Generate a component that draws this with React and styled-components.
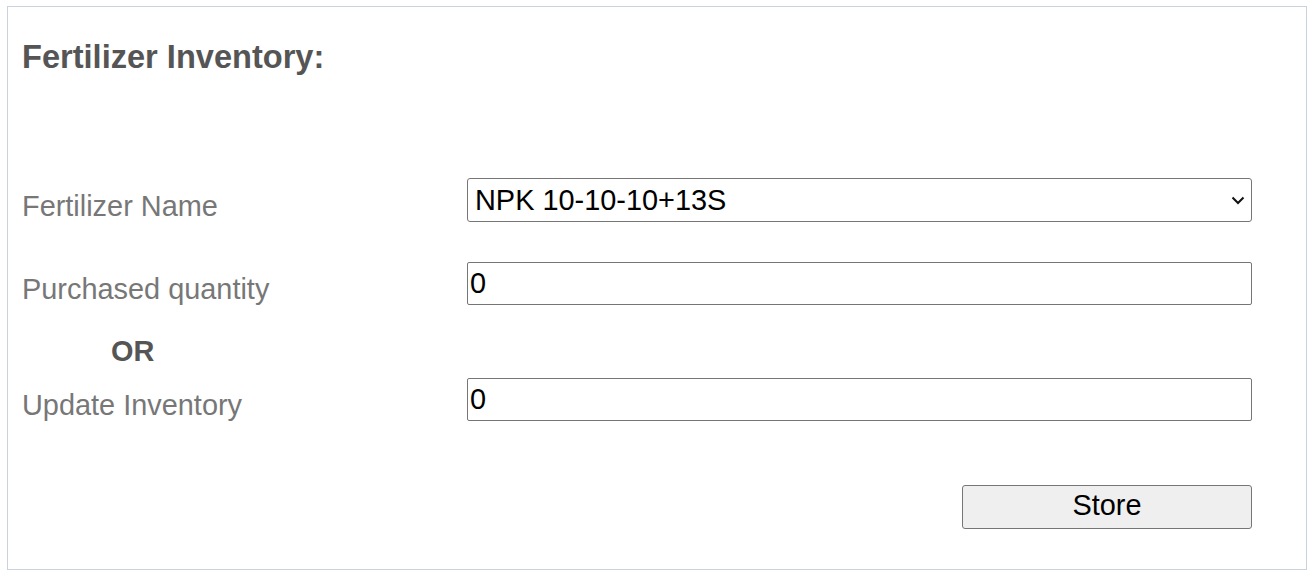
import React, { useState } from "react";
import styled, { createGlobalStyle } from "styled-components";

const GlobalStyle = createGlobalStyle`
  html, body {
    margin: 0;
    padding: 0;
    background: #fff;
  }
  body {
    font-family: "Liberation Sans", Arial, sans-serif;
  }
`;

const Panel = styled.div`
  margin: 6px 7px;
  border: 1px solid #c8d3dd;
  padding: 31px 54px 40px 14px;
  box-sizing: border-box;
  height: 564px;
  display: flex;
  flex-direction: column;
`;

const Title = styled.h2`
  margin: 0 0 103px;
  font-size: 32.6px;
  line-height: 37px;
  font-weight: bold;
  color: #555;
`;

const Row = styled.div`
  display: grid;
  grid-template-columns: 445px 1fr;
  align-items: end;
  margin-bottom: ${(p) => p.gap || 0}px;
`;

const Label = styled.label`
  font-size: 28.9px;
  line-height: 33px;
  color: #777;
  transform: translateY(1px);
`;

const Or = styled.div`
  font-size: 28.9px;
  line-height: 33px;
  font-weight: bold;
  color: #555;
  padding-left: 89px;
  margin: 30px 0 10px;
`;

const SelectWrap = styled.div`
  position: relative;
`;

const Select = styled.select`
  appearance: none;
  width: 100%;
  height: 44px;
  box-sizing: border-box;
  border: 1px solid #767676;
  border-radius: 3px;
  background: #fff;
  font-family: "Liberation Sans", Arial, sans-serif;
  font-size: 28.9px;
  color: #000;
  padding: 0 40px 0 7px;
  margin: 0;
`;

const Chevron = styled.svg`
  position: absolute;
  right: 7px;
  top: 15px;
  width: 14px;
  height: 14px;
  pointer-events: none;
`;

const Input = styled.input`
  width: 100%;
  height: 43px;
  box-sizing: border-box;
  border: 1px solid #767676;
  border-radius: 2px;
  font-family: "Liberation Sans", Arial, sans-serif;
  font-size: 28.9px;
  color: #000;
  padding: 0 2px;
  margin: 0;
`;

const Actions = styled.div`
  display: flex;
  justify-content: flex-end;
  margin-top: 64px;
`;

const Button = styled.button`
  width: 290px;
  height: 44px;
  border: 1px solid #767676;
  border-radius: 3px;
  background: #efefef;
  font-family: "Liberation Sans", Arial, sans-serif;
  font-size: 28.9px;
  line-height: 38px;
  color: #000;
  padding: 0 0 4px;
`;

export default function App() {
  const [name, setName] = useState("NPK 10-10-10+13S");
  const [qty, setQty] = useState("0");
  const [inv, setInv] = useState("0");

  return (
    <>
      <GlobalStyle />
      <Panel>
        <Title>Fertilizer Inventory:</Title>
        <Row gap={40}>
          <Label>Fertilizer Name</Label>
          <SelectWrap>
            <Select value={name} onChange={(e) => setName(e.target.value)}>
              <option>NPK 10-10-10+13S</option>
              <option>Urea 46-0-0</option>
              <option>DAP 18-46-0</option>
            </Select>
            <Chevron viewBox="0 0 14 14">
              <path d="M1.5 4.5 L7 10 L12.5 4.5" fill="none" stroke="#111" strokeWidth="2" />
            </Chevron>
          </SelectWrap>
        </Row>
        <Row>
          <Label>Purchased quantity</Label>
          <Input value={qty} onChange={(e) => setQty(e.target.value)} />
        </Row>
        <Or>OR</Or>
        <Row>
          <Label>Update Inventory</Label>
          <Input value={inv} onChange={(e) => setInv(e.target.value)} />
        </Row>
        <Actions>
          <Button>Store</Button>
        </Actions>
      </Panel>
    </>
  );
}
